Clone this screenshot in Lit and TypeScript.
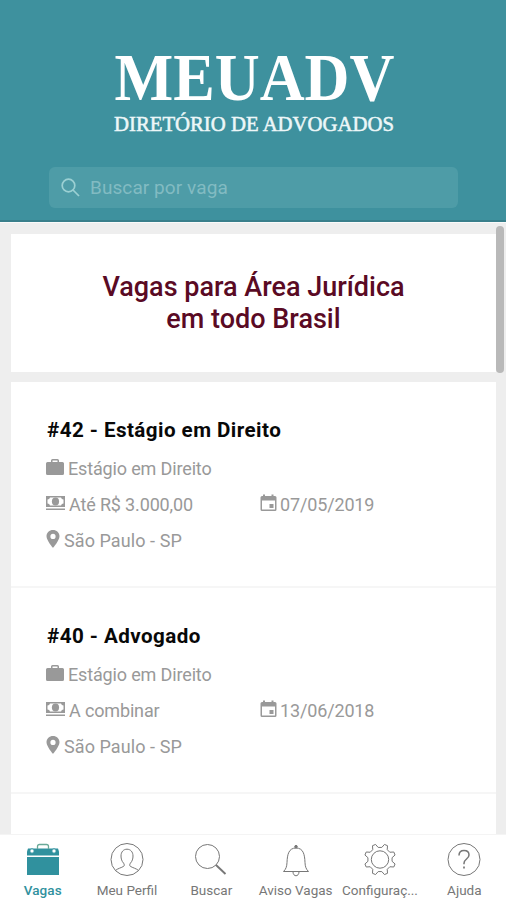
import { LitElement, html, css, svg } from "lit";
import { customElement, property } from "lit/decorators.js";

interface Job {
  title: string;
  area: string;
  salary: string;
  date: string;
  place: string;
}

const jobs: Job[] = [
  { title: "#42 - Estágio em Direito", area: "Estágio em Direito", salary: "Até R$ 3.000,00", date: "07/05/2019", place: "São Paulo - SP" },
  { title: "#40 - Advogado", area: "Estágio em Direito", salary: "A combinar", date: "13/06/2018", place: "São Paulo - SP" },
];

// Outline of an eight-toothed gear, with a valley at the top.
const gearOutline = (cx: number, cy: number) => {
  const points: string[] = [];
  for (let tooth = 0; tooth < 8; tooth++) {
    const middle = 22.5 + tooth * 45;
    for (const [offset, radius] of [[-14, 12.2], [-6, 15.7], [6, 15.7], [14, 12.2]]) {
      const angle = ((middle + offset) * Math.PI) / 180;
      points.push(`${(cx + radius * Math.sin(angle)).toFixed(2)} ${(cy - radius * Math.cos(angle)).toFixed(2)}`);
    }
  }
  return `M${points.join("L")}z`;
};

const tabIcons = {
  jobs: svg`<g fill="#30919e" stroke="none"><path d="M2 6.500h30l1 3v4H1v-4z"/><path d="M1 15h32v18H1z"/></g>
    <path d="M11.500 7V4.500q0-2 2-2h7q2 0 2 2V7" stroke="#69a998" stroke-width="1.300"/><g fill="#fff" stroke="#30919e"><circle cx="6" cy="9" r="2.200"/><circle cx="28" cy="9" r="2.200"/></g>`,
  profile: svg`<circle cx="17" cy="17.500" r="16"/><path d="M5.500 28.500c2-2 6-2.700 8.300-4.300.8-.7.500-2-.2-3-1.800-2-2.600-4.400-2.600-7.200 0-4 2.400-6.800 6-6.800s6 2.800 6 6.800c0 2.800-.8 5.200-2.600 7.200-.7 1-1 2.300-.2 3 2.300 1.600 6.300 2.300 8.300 4.300"/>`,
  search: svg`<circle cx="13.500" cy="14.500" r="12"/><path d="M22 23l9.500 9" stroke-width="1.900"/>`,
  bell: svg`<path d="M4.500 29.500h25c-2.500-2.300-3.300-5-3.500-9-.3-8-1.700-14.500-9-14.500S8.300 12.500 8 20.500c-.2 4-1 6.700-3.500 9z"/><path d="M14 30c.2 5 5.800 5 6 0"/><circle cx="17" cy="4.700" r="1.300" fill="#777"/>`,
  gear: svg`<path d="${gearOutline(17, 17.5)}" stroke-linejoin="round"/><circle cx="17" cy="17.500" r="8.700"/>`,
  help: svg`<circle cx="17" cy="17.500" r="16"/><path d="M12 13.500c0-3.300 2-5 5-5s5 1.800 5 4.500c0 4-5 4-5 8.200v1" stroke-width="1.500"/><path d="M17 24.500v2" stroke-width="1.700"/>`,
};

const tabs: { label: string; icon: keyof typeof tabIcons }[] = [
  { label: "Vagas", icon: "jobs" },
  { label: "Meu Perfil", icon: "profile" },
  { label: "Buscar", icon: "search" },
  { label: "Aviso Vagas", icon: "bell" },
  { label: "Configuraç...", icon: "gear" },
  { label: "Ajuda", icon: "help" },
];

@customElement("job-item")
class JobItem extends LitElement {
  @property({ attribute: false }) job!: Job;

  static styles = css`
    :host { display: block; box-sizing: border-box; height: 206px; padding: 33px 35px 0 35px; border-bottom: 2px solid #f6f6f6; }
    h2 { margin: 0 0 10px 1px; font-size: 20.6px; line-height: 30px; font-weight: 700; color: #080808; letter-spacing: 0.45px; }
    .row { display: flex; align-items: center; height: 26px; margin-bottom: 10px; font-size: 18px; letter-spacing: -0.15px; color: #999; white-space: nowrap; }
    .cell { display: flex; flex: none; align-items: center; width: 214px; }
    .place { letter-spacing: 0.08px; }
    svg { display: block; flex: none; fill: #999; }
    .case { width: 18px; height: 18px; margin: -3px 4px 0 0; }
    .money { width: 19px; height: 16px; margin: -3px 4px 0 0; }
    .cal { width: 17px; height: 18px; margin: -2px 3px 0 0; }
    .pin { width: 14px; height: 20px; margin: -3px 4px 0 0; }
  `;

  render() {
    const { title, area, salary, date, place } = this.job;
    return html`
      <h2>${title}</h2>
      <div class="row">
        <svg class="case" viewBox="0 0 18 18"><path fill-rule="evenodd" d="M5 4V2.500Q5 1 6.500 1h5Q13 1 13 2.500V4h3.500Q18 4 18 5.500v10q0 1.500-1.500 1.500h-15Q0 17 0 15.500v-10Q0 4 1.500 4zm1.500 0h5V2.500h-5z"/></svg>
        <span>${area}</span>
      </div>
      <div class="row">
        <div class="cell">
          <svg class="money" viewBox="0 0 19 16"><path fill-rule="evenodd" d="M0 1h19v11H0zm1.500 3.500v4Q3.500 8.500 4 10.500h11q.5-2 2.500-2v-4q-2 0-2.500-2H4q-.5 2-2.500 2z"/><ellipse cx="9.500" cy="6.500" rx="3.600" ry="4"/><path d="M0 13.500h19V15H0z"/></svg>
          <span>${salary}</span>
        </div>
        <div class="cell">
          <svg class="cal" viewBox="0 0 17 18"><path fill-rule="evenodd" d="M2 2h1V.500h2V2h6.500V.500h2V2H15q1.500 0 1.500 1.500v12Q16.500 17 15 17H2Q.500 17 .500 15.500v-12Q.500 2 2 2zm0 4.500v9h13v-9z"/><path d="M9.500 10h4v4h-4z"/></svg>
          <span>${date}</span>
        </div>
      </div>
      <div class="row place">
        <svg class="pin" viewBox="0 0 14 20"><path fill-rule="evenodd" d="M7 1c-3.600 0-6.500 2.700-6.500 6.300C.500 11.500 7 19 7 19s6.500-7.500 6.500-11.700C13.500 3.700 10.600 1 7 1zm0 3.800a2.600 2.600 0 1 1 0 5.200 2.600 2.600 0 0 1 0-5.200z"/></svg>
        <span>${place}</span>
      </div>
    `;
  }
}

@customElement("app-root")
class AppRoot extends LitElement {
  static styles = css`
    :host { display: flex; flex-direction: column; position: relative; width: 506px; height: 900px; overflow: hidden; background: #eee; font-family: Roboto, sans-serif; }
    header { flex: none; box-sizing: border-box; height: 222px; padding-top: 40px; background: #3e919e; border-bottom: 2px solid #397f8b; }
    .logo { display: block; width: 506px; height: 100px; fill: #fff; font-family: "Liberation Serif", serif; }
    .name { font-size: 68px; font-weight: 700; }
    .tagline { font-size: 20.3px; fill: #edf7f8; stroke: #edf7f8; stroke-width: 0.5px; }
    .search { display: flex; align-items: center; box-sizing: border-box; width: 409px; height: 41px; margin: 27px 0 0 49px; padding-left: 12px; border-radius: 6px; background: #4e9ca7; color: #82bbc2; font-size: 19px; }
    .search svg { width: 19px; height: 19px; margin-right: 10px; fill: none; stroke: #9bd0d3; stroke-width: 1.7; }
    .search span { letter-spacing: 0.08px; }
    main { flex: 1; min-height: 0; overflow: hidden; padding: 11px 10px 0 11px; border-top: 1px solid #fafafa; box-sizing: border-box; }
    .intro { display: flex; align-items: center; justify-content: center; height: 138px; margin-bottom: 10px; background: #fff; }
    h1 { margin: 0; font-size: 27px; line-height: 32px; font-weight: 500; text-align: center; color: #5a0a24; }
    .list { background: #fff; height: 460px; }
    .thumb { position: absolute; right: 2px; top: 226px; width: 8px; height: 147px; border-radius: 4px; background: #b9b9b9; }
    nav { display: grid; grid-template-columns: repeat(6, 1fr); flex: none; height: 66px; background: #fff; border-top: 1px solid #f4f4f4; box-sizing: border-box; }
    .tab { display: flex; flex-direction: column; align-items: center; padding: 7px 0 0 1px; font-size: 13.5px; line-height: 18px; color: #777; white-space: nowrap; }
    .tab svg { width: 34px; height: 36px; margin-bottom: 3px; fill: none; stroke: #777; stroke-width: 1; }
    .tab.active { color: #30919e; font-weight: 500; letter-spacing: 0.1px; }
  `;

  render() {
    return html`
      <header>
        <svg class="logo" viewBox="0 40 506 100">
          <text class="name" x="114.500" y="99.500" textLength="280" lengthAdjust="spacingAndGlyphs">MEUADV</text>
          <text class="tagline" x="114" y="130.500" textLength="280" lengthAdjust="spacingAndGlyphs">DIRETÓRIO DE ADVOGADOS</text>
        </svg>
        <div class="search">
          <svg viewBox="0 0 19 19"><circle cx="7.500" cy="7.500" r="6.300"/><path d="M12 12l6 6"/></svg>
          <span>Buscar por vaga</span>
        </div>
      </header>
      <main>
        <section class="intro"><h1>Vagas para Área Jurídica<br />em todo Brasil</h1></section>
        <section class="list">${jobs.map((job) => html`<job-item .job=${job}></job-item>`)}</section>
      </main>
      <div class="thumb"></div>
      <nav>
        ${tabs.map(
          (tab, i) => html`<div class="tab ${i === 0 ? "active" : ""}">
            <svg viewBox="0 0 34 36">${tabIcons[tab.icon]}</svg>
            <span>${tab.label}</span>
          </div>`,
        )}
      </nav>
    `;
  }
}
